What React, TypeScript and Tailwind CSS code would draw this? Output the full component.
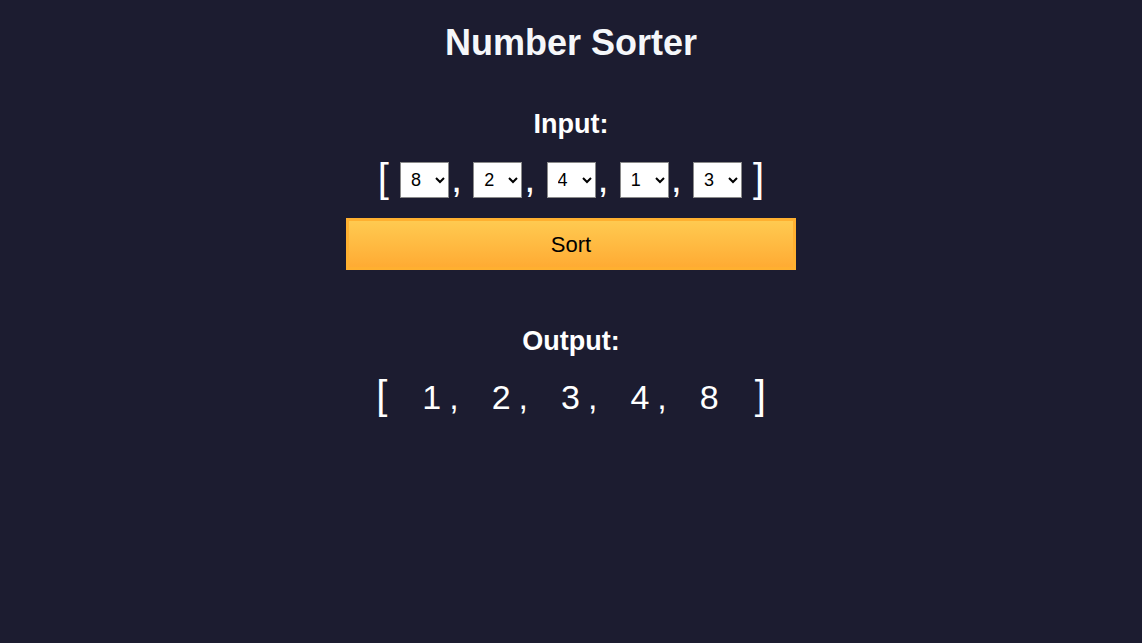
import { useState } from "react";

const OPTIONS = [1, 2, 3, 4, 5, 6, 7, 8, 9];

export default function App() {
  const [values, setValues] = useState([8, 2, 4, 1, 3]);
  const [sorted, setSorted] = useState([1, 2, 3, 4, 8]);

  const update = (i: number, v: number) => {
    const next = [...values];
    next[i] = v;
    setValues(next);
  };

  return (
    <div className="min-h-screen w-full bg-[#1c1c30] text-white font-['Liberation_Sans',Arial,sans-serif] flex flex-col items-center pt-[21px]">
      <h1 className="text-[36px] leading-[43px] font-bold text-[#f5f7fa]">Number Sorter</h1>

      {/* input */}
      <h2 className="mt-[44px] text-[27px] leading-[32px] font-bold">Input:</h2>
      <div className="mt-[18px] h-[40px] flex items-start text-[40px] leading-[40px] whitespace-pre">
        <span>[ </span>
        {values.map((v, i) => (
          <div key={i} className="flex items-start">
            <select
              value={v}
              onChange={(e) => update(i, Number(e.target.value))}
              className="mt-[4px] h-[36px] w-[49px] bg-white text-black text-[18px] leading-none border border-[#8a8a8a] pl-[6px] font-['Liberation_Sans',Arial,sans-serif]"
            >
              {OPTIONS.map((o) => (
                <option key={o} value={o}>
                  {o}
                </option>
              ))}
            </select>
            {i < values.length - 1 && <span className="ml-[2px]">, </span>}
          </div>
        ))}
        <span> ]</span>
      </div>

      <button
        onClick={() => setSorted([...values].sort((a, b) => a - b))}
        className="mt-[20px] w-[450px] h-[52px] border-[3px] border-[#ffb030] bg-gradient-to-b from-[#ffca50] to-[#ffab33] text-black text-[22px]"
      >
        Sort
      </button>

      {/* output */}
      <h2 className="mt-[55px] text-[27px] leading-[32px] font-bold">Output:</h2>
      <div className="mt-[18px] flex items-baseline h-[40px] leading-[40px]">
        <span className="text-[40px]">[</span>
        {sorted.map((n, i) => (
          <div key={i} className="flex items-baseline text-[34px]">
            <span className={i === 0 ? "ml-[35px]" : "ml-[33px]"}>{n}</span>
            {i < sorted.length - 1 && <span className="ml-[8px]">,</span>}
          </div>
        ))}
        <span className="text-[40px] ml-[36px]">]</span>
      </div>
    </div>
  );
}
